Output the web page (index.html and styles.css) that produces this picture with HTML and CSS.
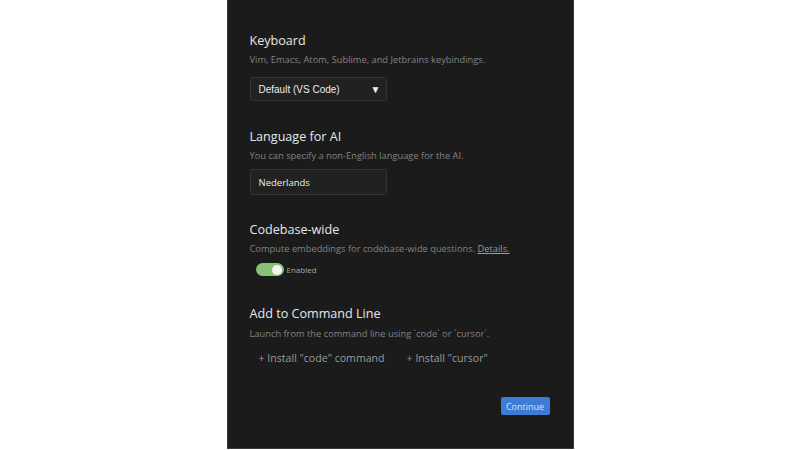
FILE: index.html
```html
<!DOCTYPE html>
<html lang="en">
<head>
    <meta charset="UTF-8">
    <meta name="viewport" content="width=device-width, initial-scale=1.0">
    <title>Settings</title>
    <link rel="stylesheet" href="styles.css">
</head>
<body>
    <div class="panel">
        <div class="section first">
            <h2>Keyboard</h2>
            <p class="desc">Vim, Emacs, Atom, Sublime, and Jetbrains keybindings.</p>
            <div class="select">
                <span>Default (VS Code)</span>
                <span class="arrow">&#9660;</span>
            </div>
        </div>

        <div class="section second">
            <h2>Language for AI</h2>
            <p class="desc">You can specify a non-English language for the AI.</p>
            <div class="text-input">Nederlands</div>
        </div>

        <div class="section third">
            <h2>Codebase-wide</h2>
            <p class="desc">Compute embeddings for codebase-wide questions. <a href="#">Details.</a></p>
            <div class="toggle-row">
                <span class="toggle"><span class="knob"></span></span>
                <span class="toggle-label">Enabled</span>
            </div>
        </div>

        <div class="section last">
            <h2>Add to Command Line</h2>
            <p class="desc">Launch from the command line using `code` or `cursor`.</p>
            <div class="install-row">
                <button class="install">+ Install "code" command</button>
                <button class="install">+ Install "cursor"</button>
            </div>
        </div>

        <div class="footer">
            <button class="continue">Continue</button>
        </div>
    </div>
</body>
</html>
```

FILE: styles.css
```css
body {
    margin: 0;
    padding: 0;
    background-color: #fff;
    font-family: "Open Sans", "Noto Sans", sans-serif;
    display: flex;
    justify-content: center;
}

.panel {
    width: 301px;
    height: 448px;
    background-color: #1b1b1b;
    border: 1px solid #3a3a3a;
    border-top: none;
    padding: 0 22px;
    box-sizing: content-box;
}

.section {
    margin-top: 25px;
}

.section.first {
    margin-top: 32px;
}

.section.second {
    margin-top: 27px;
}

.section.third {
    margin-top: 26px;
}

.section.last {
    margin-top: 29px;
}

h2 {
    margin: 0;
    font-size: 12.6px;
    line-height: 18px;
    font-weight: 400;
    color: #e8e8e8;
}

.desc {
    margin: 3px 0 0 0;
    font-size: 9.3px;
    line-height: 14px;
    color: #828282;
}

.last .desc {
    margin-top: 4px;
}

.desc a {
    color: #9a9a9a;
    text-decoration: underline;
}

.select,
.text-input {
    width: 127px;
    height: 22px;
    margin-top: 10px;
    padding-left: 8px;
    background-color: #212121;
    border: 1px solid #333;
    border-radius: 2px;
    display: flex;
    align-items: center;
    justify-content: space-between;
    font-family: "Liberation Sans", Arial, sans-serif;
    font-size: 10px;
    color: #ececec;
}

.select .arrow {
    font-size: 10px;
    margin-right: 5px;
    color: #f0f0f0;
}

.text-input {
    height: 24px;
    margin-top: 6px;
    font-family: "Open Sans", "Noto Sans", sans-serif;
    font-size: 9.5px;
}

.toggle-row {
    display: flex;
    align-items: center;
    height: 13px;
    margin: 7px 0 0 6px;
}

.toggle {
    width: 28px;
    height: 13px;
    border-radius: 7px;
    background-color: #86c474;
    display: flex;
    align-items: center;
    justify-content: flex-end;
}

.knob {
    width: 10px;
    height: 10px;
    border-radius: 50%;
    background-color: #f4f4f4;
    margin-right: 2px;
}

.toggle-label {
    margin-left: 3px;
    font-size: 8px;
    color: #a8a8a8;
}

.install-row {
    display: flex;
    gap: 22px;
    margin: 10px 0 0 9px;
}

.install {
    background: none;
    border: none;
    padding: 0;
    font-family: "Open Sans", "Noto Sans", sans-serif;
    font-size: 10.6px;
    line-height: 15px;
    color: #9a9a9a;
    cursor: pointer;
}

.footer {
    display: flex;
    justify-content: flex-end;
    margin-top: 31px;
    padding-right: 1px;
}

.continue {
    background-color: #3c7bd6;
    color: #d4e3f8;
    border: none;
    border-radius: 2px;
    font-family: "Open Sans", "Noto Sans", sans-serif;
    font-size: 9px;
    padding: 0;
    height: 18px;
    width: 49px;
    cursor: pointer;
}
```
